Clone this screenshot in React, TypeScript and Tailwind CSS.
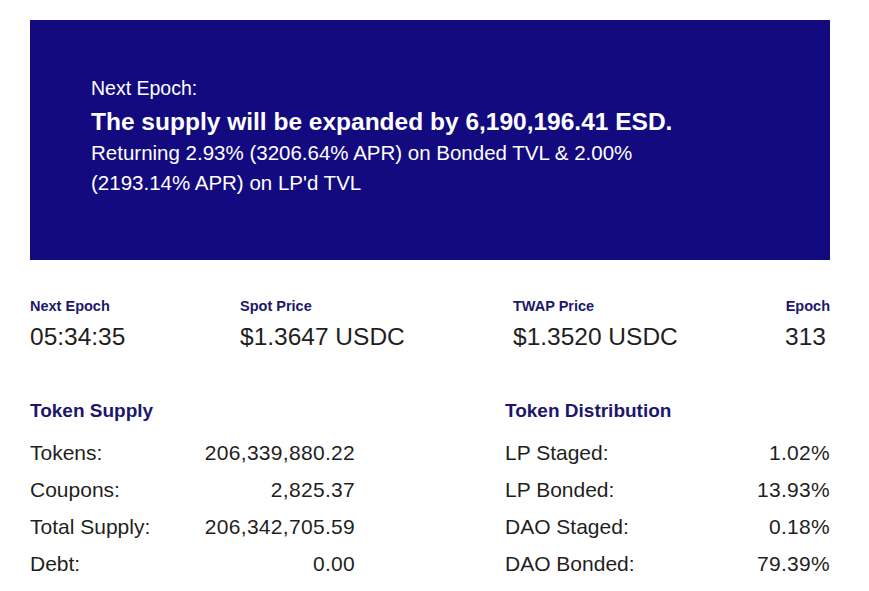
const stats = [
  { label: 'Next Epoch', value: '05:34:35' },
  { label: 'Spot Price', value: '$1.3647 USDC' },
  { label: 'TWAP Price', value: '$1.3520 USDC' },
];

const supply = [
  ['Tokens:', '206,339,880.22'],
  ['Coupons:', '2,825.37'],
  ['Total Supply:', '206,342,705.59'],
  ['Debt:', '0.00'],
];

const distribution = [
  ['LP Staged:', '1.02%'],
  ['LP Bonded:', '13.93%'],
  ['DAO Staged:', '0.18%'],
  ['DAO Bonded:', '79.39%'],
];

const Table = ({ title, rows }: { title: string; rows: string[][] }) => (
  <div className="w-[325px]">
    <h3 className="text-[19px] font-semibold text-[#1c176b] leading-[24px] mb-[11px]">{title}</h3>
    <div className="flex flex-col">
      {rows.map(([k, v]) => (
        <div key={k} className="flex justify-between h-[37px] items-center text-[21px] text-[#1f1f1f]">
          <span>{k}</span>
          <span className="tracking-[0.3px]">{v}</span>
        </div>
      ))}
    </div>
  </div>
);

export default function App() {
  return (
    <div className="bg-white min-h-screen px-[30px] pt-[20px] w-[869px] font-['Liberation_Sans',sans-serif]">
      {/* Banner */}
      <div className="bg-[#130a80] h-[240px] w-[800px] pl-[61px] pt-[55px] text-white">
        <p className="text-[19.5px] leading-[26px]">Next Epoch:</p>
        <p className="text-[24.5px] font-bold leading-[32px] mt-[5px]">
          The supply will be expanded by 6,190,196.41 ESD.
        </p>
        <p className="text-[20.5px] leading-[30px] w-[580px]">
          Returning 2.93% (3206.64% APR) on Bonded TVL &amp; 2.00% (2193.14% APR) on LP'd TVL
        </p>
      </div>

      {/* Stats */}
      <div className="grid grid-cols-[210px_273px_1fr_auto] w-[800px] mt-[36px]">
        {stats.map((s) => (
          <div key={s.label}>
            <div className="text-[14.5px] font-bold text-[#1c176b] leading-[20px]">{s.label}</div>
            <div className="text-[24.5px] text-[#1f1f1f] leading-[30px] mt-[6px]">{s.value}</div>
          </div>
        ))}
        <div className="text-right">
          <div className="text-[14.5px] font-bold text-[#1c176b] leading-[20px]">Epoch</div>
          <div className="text-[24.5px] text-[#1f1f1f] leading-[30px] mt-[6px] pr-[4px]">313</div>
        </div>
      </div>

      {/* Tables */}
      <div className="flex justify-between w-[800px] mt-[47px]">
        <Table title="Token Supply" rows={supply} />
        <Table title="Token Distribution" rows={distribution} />
      </div>
    </div>
  );
}
